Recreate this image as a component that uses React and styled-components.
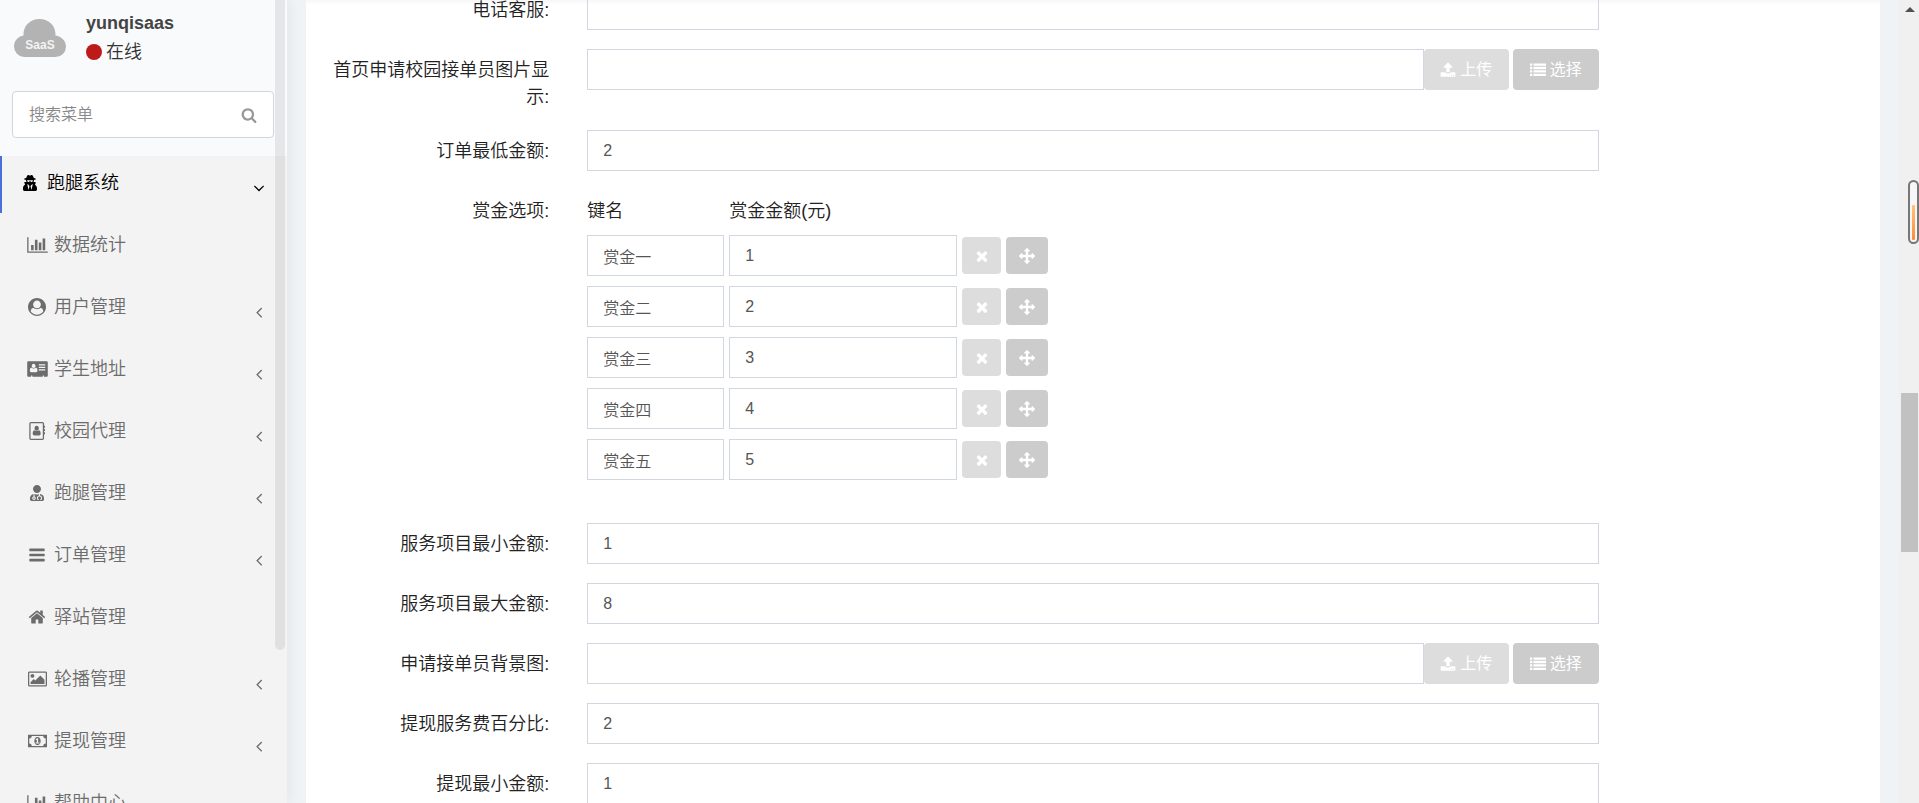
import React from 'react';
import styled, { createGlobalStyle, css } from 'styled-components';
import { FaUserMd, FaUserSecret } from 'react-icons/fa';

const GlobalStyle = createGlobalStyle`
  * {
    box-sizing: border-box;
  }
  body {
    margin: 0;
    color: #222;
    font-family: "Liberation Sans", "Noto Sans CJK SC", sans-serif;
    font-size: 18px;
    font-weight: 350;
    line-height: 27px;
  }
  input, button {
    font: inherit;
  }
`;

const Page = styled.div`
  display: flex;
  height: 100vh;
  overflow: hidden;
  background: #eff3f6;
`;

/* sidebar */
const Sidebar = styled.aside`
  position: relative;
  flex: none;
  width: 287px;
  background: #f3f3f3;
  box-shadow: 2px 0 12px rgba(0, 30, 60, 0.06);
`;
const SidebarThumb = styled.div`
  position: absolute;
  top: 0;
  right: 2px;
  width: 10px;
  height: 81vh;
  border-radius: 0 0 5px 5px;
  background: rgba(0, 0, 0, 0.08);
`;
const SidebarTop = styled.div`
  height: 156px;
  padding: 10px 13px 0 12px;
  background: #f9fafc;
`;
const UserPanel = styled.div`
  display: flex;
  gap: 20px;
  height: 81px;
`;
const Cloud = styled.svg`
  width: 54px;
  height: 54px;
`;
const UserName = styled.p`
  margin: 0;
  font-weight: bold;
  color: #444;
`;
const Status = styled.span`
  display: flex;
  align-items: center;
  gap: 4px;
  line-height: 30px;
  color: #333;
`;
const Dot = styled.i`
  width: 16px;
  height: 16px;
  border-radius: 50%;
  background: #bd1a1a;
`;
const SearchForm = styled.form`
  display: flex;
  height: 47px;
  border: 1px solid #cfd6de;
  border-radius: 4px;
  background: #fff;
`;
const SearchInput = styled.input`
  flex: 1;
  min-width: 0;
  padding: 0 16px;
  border: 0;
  outline: 0;
  background: none;
  font-size: 16px;
  &::placeholder {
    color: #888;
  }
`;
const SearchButton = styled.button`
  display: flex;
  align-items: center;
  padding: 0 16px;
  border: 0;
  background: none;
  color: #999;
`;
const Menu = styled.ul`
  display: flex;
  flex-direction: column;
  gap: 5px;
  margin: 0;
  padding: 0;
  list-style: none;
`;
const MenuLink = styled.a`
  display: flex;
  align-items: center;
  gap: 6px;
  padding: 13px 24px 16px 26px;
  line-height: 28px;
  color: #6c6c6c;
  text-decoration: none;
  ${({ $active }) => $active && css`
    padding-left: 17px;
    border-left: 2px solid #4a6fdc;
    color: #000;
  `}
`;
const MenuIcon = styled.span`
  display: flex;
  justify-content: center;
  width: 22px;
`;
const MenuArrow = styled.span`
  display: flex;
  align-items: flex-end;
  align-self: flex-end;
  margin-left: auto;
  margin-right: -5px;
`;

/* content */
const Content = styled.main`
  flex: 1;
  min-width: 0;
  margin: 0 19px;
  background: #fff;
  background-image: linear-gradient(#f7f7f7, #fff 5px);
`;
const Form = styled.form`
  margin-top: -11px;
`;
const FormRow = styled.div`
  display: grid;
  grid-template-columns: 2fr 8fr 2fr;
  margin-bottom: 19px;
`;
const Label = styled.label`
  padding: 8px 19px 0;
  text-align: right;
`;
const Field = styled.div`
  display: flex;
  align-items: flex-start;
  padding: 0 19px;
`;
const TextInput = styled.input`
  flex: ${({ $width }) => ($width ? `0 0 ${$width}px` : '1')};
  width: ${({ $width }) => ($width ? `${$width}px` : 'auto')};
  min-width: 0;
  height: 41px;
  padding: 0 15px;
  border: 1px solid #d2d6de;
  outline: 0;
  background: none;
  font-size: 16px;
  color: #555;
`;
const Button = styled.button`
  display: flex;
  align-items: center;
  justify-content: center;
  gap: 4px;
  width: ${({ $small }) => ($small ? '42px' : '86px')};
  height: ${({ $small }) => ($small ? '37px' : '41px')};
  padding: 0;
  border: 0;
  border-radius: 4px;
  background: #ccc;
  color: #fff;
  font-size: 16px;
  font-weight: 400;
  white-space: nowrap;
`;
const PaleButton = styled(Button)`
  width: ${({ $small }) => ($small ? '39px' : '85px')};
  margin-right: ${({ $small }) => ($small ? '0' : '4px')};
  background: #ddd;
`;
const List = styled.div`
  display: flex;
  flex-direction: column;
  gap: 10px;
  padding: 8px 19px 24px;
`;
const ListRow = styled.div`
  display: flex;
  align-items: center;
  gap: 5px;
`;
const KeyHead = styled.span`
  width: 137px;
`;

/* page scrollbar */
const Track = styled.div`
  display: flex;
  flex-direction: column;
  align-items: center;
  flex: 0 0 20px;
  padding: 7px 1px 0 2px;
  background: #f0f0f0;
`;
const ArrowUp = styled.i`
  border: 5px solid transparent;
  border-top: 0;
  border-bottom-color: #505050;
`;
const Thumb = styled.div`
  width: 100%;
  height: 159px;
  margin-top: 381px;
  background: #c1c1c1;
`;
const Gauge = styled.div`
  position: absolute;
  top: 180px;
  right: 0;
  display: flex;
  align-items: flex-end;
  width: 11px;
  height: 64px;
  padding: 2px;
  border: 2px solid #777;
  border-radius: 6px;
  background: #f7f7f7;
`;
const GaugeLevel = styled.div`
  width: 100%;
  height: 35px;
  border-radius: 1px;
  background: linear-gradient(#ffc27a, #ff8a3c);
`;

const icons = {
  chart: [2048, 'M640 896v512h-256v-512h256zm384-512v1024h-256v-1024h256zm1024 1152v128h-2048v-1536h128v1408h1920zm-640-896v768h-256v-768h256zm384-384v1152h-256v-1152h256z'],
  user: [1792, 'M1523 1339q-22-155-87.5-257.5t-184.5-118.5q-67 74-159.5 115.5t-195.5 41.5-195.5-41.5-159.5-115.5q-119 16-184.5 118.5t-87.5 257.5q106 150 271 237.5t356 87.5 356-87.5 271-237.5zm-243-699q0-159-112.5-271.5t-271.5-112.5-271.5 112.5-112.5 271.5 112.5 271.5 271.5 112.5 271.5-112.5 112.5-271.5zm512 256q0 182-71 347.5t-190.5 286-285.5 191.5-349 71q-182 0-348-71t-286-191-191-286-71-348 71-348 191-286 286-191 348-71 348 71 286 191 191 286 71 348z'],
  card: [2048, 'M112 128h1824q46 0 79 33t33 79v1312q0 46-33 79t-79 33h-272v-96q0-32-32-32h-64q-32 0-32 32v96h-1024v-96q0-32-32-32h-64q-32 0-32 32v96h-272q-46 0-79-33t-33-79v-1312q0-46 33-79t79-33zM640 384a190 210 0 1 0 1 0zM400 740q-144 30-144 330 0 146 140 146h488q140 0 140-146 0-300-144-330-100 96-240 96t-240-96zM1152 416h640v128h-640zM1152 672h640v128h-640zM1152 928h640v128h-640z'],
  book: [1792, 'M288 0h1152q66 0 113 47t47 113v224h64q32 0 32 32v128q0 32-32 32h-64v128h64q32 0 32 32v128q0 32-32 32h-64v128h64q32 0 32 32v128q0 32-32 32h-64v416q0 66-47 113t-113 47h-1152q-66 0-113-47t-47-113v-1472q0-66 47-113t113-47zM288 128q-32 0-32 32v1472q0 32 32 32h1152q32 0 32-32v-1472q0-32-32-32zM864 384a220 240 0 1 1-1 0zM648 810q90 86 216 86t216-86q184 20 184 370 0 164-150 164h-500q-150 0-150-164 0-350 184-370z'],
  bars: [1792, 'M1664 1344v128q0 26-19 45t-45 19h-1408q-26 0-45-19t-19-45v-128q0-26 19-45t45-19h1408q26 0 45 19t19 45zm0-512v128q0 26-19 45t-45 19h-1408q-26 0-45-19t-19-45v-128q0-26 19-45t45-19h1408q26 0 45 19t19 45zm0-512v128q0 26-19 45t-45 19h-1408q-26 0-45-19t-19-45v-128q0-26 19-45t45-19h1408q26 0 45 19t19 45z'],
  home: [1792, 'M1472 992v480q0 26-19 45t-45 19h-384v-384h-256v384h-384q-26 0-45-19t-19-45v-480q0-1 .5-3t.5-3l575-474 575 474q1 2 1 6zm223-69l-62 74q-8 9-21 11h-3q-13 0-21-7l-692-577-692 577q-12 8-24 7-13-2-21-11l-62-74q-8-10-7-23.5t11-21.5l719-599q32-26 76-26t76 26l244 204v-195q0-14 9-23t23-9h192q14 0 23 9t9 23v408l219 182q10 8 11 21.5t-7 23.5z'],
  image: [1920, 'M640 576q0 80-56 136t-136 56-136-56-56-136 56-136 136-56 136 56 56 136zm1024 384v448h-1408v-192l320-320 160 160 512-512zm96-704h-1600q-13 0-22.500 9.500t-9.500 22.500v1216q0 13 9.500 22.500t22.500 9.500h1600q13 0 22.500-9.500t9.500-22.500v-1216q0-13-9.500-22.500t-22.500-9.500zm160 32v1216q0 66-47 113t-113 47h-1600q-66 0-113-47t-47-113v-1216q0-66 47-113t113-47h1600q66 0 113 47t47 113z'],
  money: [1920, 'M768 1152h384v-96h-128v-448h-114l-148 137 77 80q42-37 55-57h2v288h-128v96zm512-256q0 70-21 142t-59.5 134-101.5 101-138 39-138-39-101.5-101-59.5-134-21-142 21-142 59.5-134 101.5-101 138-39 138 39 101.5 101 59.5 134 21 142zm512 256v-512q-106 0-181-75t-75-181h-1152q0 106-75 181t-181 75v512q106 0 181 75t75 181h1152q0-106 75-181t181-75zm128-832v1152q0 26-19 45t-45 19h-1792q-26 0-45-19t-19-45v-1152q0-26 19-45t45-19h1792q26 0 45 19t19 45z'],
  search: [1792, 'M1216 832q0-185-131.5-316.5t-316.5-131.5-316.5 131.5-131.5 316.5 131.5 316.5 316.5 131.5 316.5-131.5 131.5-316.5zm512 832q0 52-38 90t-90 38q-54 0-90-38l-343-342q-179 124-399 124-143 0-273.5-55.5t-225-150-150-225-55.5-273.5 55.5-273.5 150-225 225-150 273.5-55.5 273.5 55.5 225 150 150 225 55.5 273.5q0 220-124 399l343 343q37 37 37 90z'],
  left: [1792, 'M1203 544q0 13-10 23l-393 393 393 393q10 10 10 23t-10 23l-50 50q-10 10-23 10t-23-10l-466-466q-10-10-10-23t10-23l466-466q10-10 23-10t23 10l50 50q10 10 10 23z'],
  down: [1792, 'M1395 736q0 13-10 23l-466 466q-10 10-23 10t-23-10l-466-466q-10-10-10-23t10-23l50-50q10-10 23-10t23 10l393 393 393-393q10-10 23-10t23 10l50 50q10 10 10 23z'],
  upload: [1792, 'M1344 1472q0-26-19-45t-45-19-45 19-19 45 19 45 45 19 45-19 19-45zm256 0q0-26-19-45t-45-19-45 19-19 45 19 45 45 19 45-19 19-45zm128-224v320q0 40-28 68t-68 28h-1472q-40 0-68-28t-28-68v-320q0-40 28-68t68-28h427q21 56 70.5 92t110.5 36h256q61 0 110.5-36t70.5-92h427q40 0 68 28t28 68zm-325-648q-17 40-59 40h-256v448q0 26-19 45t-45 19h-256q-26 0-45-19t-19-45v-448h-256q-42 0-59-40-17-39 14-69l448-448q18-19 45-19t45 19l448 448q31 30 14 69z'],
  list: [1792, 'M0 160h256v256h-256zM384 160h1408v256h-1408zM0 544h256v256h-256zM384 544h1408v256h-1408zM0 928h256v256h-256zM384 928h1408v256h-1408zM0 1312h256v256h-256zM384 1312h1408v256h-1408z'],
  times: [1792, 'M1490 1322q0 40-28 68l-136 136q-28 28-68 28t-68-28l-294-294-294 294q-28 28-68 28t-68-28l-136-136q-28-28-28-68t28-68l294-294-294-294q-28-28-28-68t28-68l136-136q28-28 68-28t68 28l294 294 294-294q28-28 68-28t68 28l136 136q28 28 28 68t-28 68l-294 294 294 294q28 28 28 68z'],
  move: [1792, 'M1792 896q0 26-19 45l-256 256q-19 19-45 19t-45-19-19-45v-128h-384v384h128q26 0 45 19t19 45-19 45l-256 256q-19 19-45 19t-45-19l-256-256q-19-19-19-45t19-45 45-19h128v-384h-384v128q0 26-19 45t-45 19-45-19l-256-256q-19-19-19-45t19-45l256-256q19-19 45-19t45 19 19 45v128h384v-384h-128q-26 0-45-19t-19-45 19-45l256-256q19-19 45-19t45 19l256 256q19 19 19 45t-19 45-45 19h-128v384h384v-128q0-26 19-45t45-19 45 19l256 256q19 19 19 45z'],
};

const Icon = ({ name, size = 18 }) => {
  const [width, path] = icons[name];
  return (
    <svg width={Math.round(size * width / 1792)} height={size} viewBox={`0 0 ${width} 1792`} fill="currentColor" aria-hidden="true">
      <path fillRule="evenodd" d={path} />
    </svg>
  );
};

const menu = [
  { text: '数据统计', icon: <Icon name="chart" /> },
  { text: '用户管理', icon: <Icon name="user" />, sub: true },
  { text: '学生地址', icon: <Icon name="card" />, sub: true },
  { text: '校园代理', icon: <Icon name="book" />, sub: true },
  { text: '跑腿管理', icon: <FaUserMd size={16} />, sub: true },
  { text: '订单管理', icon: <Icon name="bars" />, sub: true },
  { text: '驿站管理', icon: <Icon name="home" /> },
  { text: '轮播管理', icon: <Icon name="image" />, sub: true },
  { text: '提现管理', icon: <Icon name="money" />, sub: true },
  { text: '帮助中心', icon: <Icon name="chart" />, sub: true },
];

const rewards = ['赏金一', '赏金二', '赏金三', '赏金四', '赏金五'];

const TextRow = ({ id, label, value = '', upload }) => (
  <FormRow>
    <Label htmlFor={id}>{label}:</Label>
    <Field>
      <TextInput id={id} type="text" defaultValue={value} />
      {upload && (
        <>
          <PaleButton type="button"><Icon name="upload" size={16} />上传</PaleButton>
          <Button type="button"><Icon name="list" size={16} />选择</Button>
        </>
      )}
    </Field>
  </FormRow>
);

const App = () => {
  return (
    <Page>
      <GlobalStyle />
      <Sidebar>
        <SidebarTop>
          <UserPanel>
            <Cloud viewBox="0 0 54 54" aria-hidden="true">
              <path fill="#b3b3b3" d="M12 47a10.500 10.500 0 0 1-10-10.500c0-5.500 4-10 9.500-11C11 16 18 9 27.500 9S44 16 43.500 25.500c6 1 10.500 5.500 10.500 11A10.500 10.500 0 0 1 43.500 47z" />
              <text x="28" y="39" textAnchor="middle" fontSize="12" fontWeight="bold" fill="#f3f3f3">SaaS</text>
            </Cloud>
            <div>
              <UserName>yunqisaas</UserName>
              <Status><Dot />在线</Status>
            </div>
          </UserPanel>
          <SearchForm>
            <SearchInput type="text" placeholder="搜索菜单" aria-label="搜索菜单" />
            <SearchButton type="button" aria-label="搜索"><Icon name="search" size={16} /></SearchButton>
          </SearchForm>
        </SidebarTop>
        <Menu>
          <li>
            <MenuLink href="#" $active>
              <MenuIcon><FaUserSecret size={16} /></MenuIcon>
              跑腿系统
              <MenuArrow><Icon name="down" /></MenuArrow>
            </MenuLink>
          </li>
          {menu.map((item) => (
            <li key={item.text}>
              <MenuLink href="#">
                <MenuIcon>{item.icon}</MenuIcon>
                {item.text}
                {item.sub && <MenuArrow><Icon name="left" /></MenuArrow>}
              </MenuLink>
            </li>
          ))}
        </Menu>
        <SidebarThumb />
      </Sidebar>
      <Content>
        <Form>
          <TextRow id="phone" label="电话客服" />
          <TextRow id="apply-image" label="首页申请校园接单员图片显示" upload />
          <TextRow id="order-min" label="订单最低金额" value="2" />
          <FormRow>
            <Label as="span">赏金选项:</Label>
            <List>
              <ListRow>
                <KeyHead>键名</KeyHead>
                <span>赏金金额(元)</span>
              </ListRow>
              {rewards.map((name, i) => (
                <ListRow key={name}>
                  <TextInput $width={137} type="text" aria-label="键名" defaultValue={name} />
                  <TextInput $width={228} type="text" aria-label="赏金金额(元)" defaultValue={i + 1} />
                  <PaleButton $small type="button" aria-label="删除"><Icon name="times" size={16} /></PaleButton>
                  <Button $small type="button" aria-label="移动"><Icon name="move" size={16} /></Button>
                </ListRow>
              ))}
            </List>
          </FormRow>
          <TextRow id="service-min" label="服务项目最小金额" value="1" />
          <TextRow id="service-max" label="服务项目最大金额" value="8" />
          <TextRow id="apply-bg" label="申请接单员背景图" upload />
          <TextRow id="fee" label="提现服务费百分比" value="2" />
          <TextRow id="withdraw-min" label="提现最小金额" value="1" />
        </Form>
      </Content>
      <Track>
        <ArrowUp />
        <Thumb />
      </Track>
      <Gauge><GaugeLevel /></Gauge>
    </Page>
  );
};

export default App;
